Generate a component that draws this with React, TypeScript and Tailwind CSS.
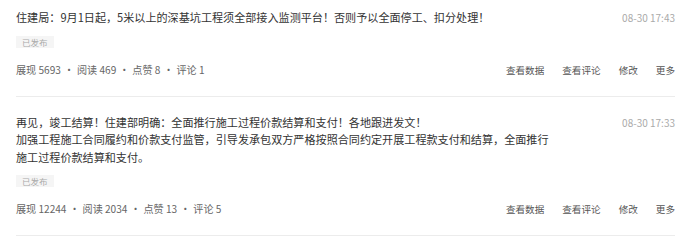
import React from 'react';

interface Post {
  id: number;
  title: string;
  desc?: string;
  time: string;
  stats: { label: string; value: number }[];
}

const posts: Post[] = [
  {
    id: 1,
    title: '住建局：9月1日起，5米以上的深基坑工程须全部接入监测平台！否则予以全面停工、扣分处理！',
    time: '08-30 17:43',
    stats: [
      { label: '展现', value: 5693 },
      { label: '阅读', value: 469 },
      { label: '点赞', value: 8 },
      { label: '评论', value: 1 },
    ],
  },
  {
    id: 2,
    title: '再见，竣工结算！住建部明确：全面推行施工过程价款结算和支付！各地跟进发文！',
    desc: '加强工程施工合同履约和价款支付监管，引导发承包双方严格按照合同约定开展工程款支付和结算，全面推行施工过程价款结算和支付。',
    time: '08-30 17:33',
    stats: [
      { label: '展现', value: 12244 },
      { label: '阅读', value: 2034 },
      { label: '点赞', value: 13 },
      { label: '评论', value: 5 },
    ],
  },
];

const actions = ['查看数据', '查看评论', '修改', '更多'];

function PostItem({ post, first }: { post: Post; first: boolean }) {
  return (
    <li className={`border-b border-[#ececec] pb-[19px] ${first ? 'pt-[9px]' : 'pt-[17px]'}`}>
      <div className="flex justify-between">
        <div className="w-[538px] text-[11.1px] leading-[17.5px] text-[#333]">
          <p>{post.title}</p>
          {post.desc && <p>{post.desc}</p>}
        </div>
        <span className="text-[10px] leading-[17.5px] text-[#aaa]">{post.time}</span>
      </div>
      <div className="mt-[9px] flex leading-[12px]">
        <span className="bg-[#f5f5f5] px-[6px] text-[8.5px] leading-[12px] text-[#aaa]">已发布</span>
      </div>
      <div className="mt-[15px] flex h-[14px] items-center justify-between">
        <div className="flex items-center text-[10.1px] leading-[14px] text-[#666]">
          {post.stats.map((s, i) => (
            <React.Fragment key={s.label}>
              {i > 0 && <span className="mx-[3px]">·</span>}
              <span>
                {s.label} {s.value}
              </span>
            </React.Fragment>
          ))}
        </div>
        <div className="flex gap-[18px] text-[9.6px] leading-[14px] text-[#555]">
          {actions.map((a) => (
            <button key={a} className="leading-[14px]">
              {a}
            </button>
          ))}
        </div>
      </div>
    </li>
  );
}

export default function App() {
  return (
    <div
      className="h-[236px] w-[700px] overflow-hidden bg-white pl-4 pr-[25px]"
      style={{ fontFamily: '"Noto Sans CJK SC", "Noto Sans", sans-serif' }}
    >
      <ul>
        {posts.map((p, i) => (
          <PostItem key={p.id} post={p} first={i === 0} />
        ))}
      </ul>
    </div>
  );
}
